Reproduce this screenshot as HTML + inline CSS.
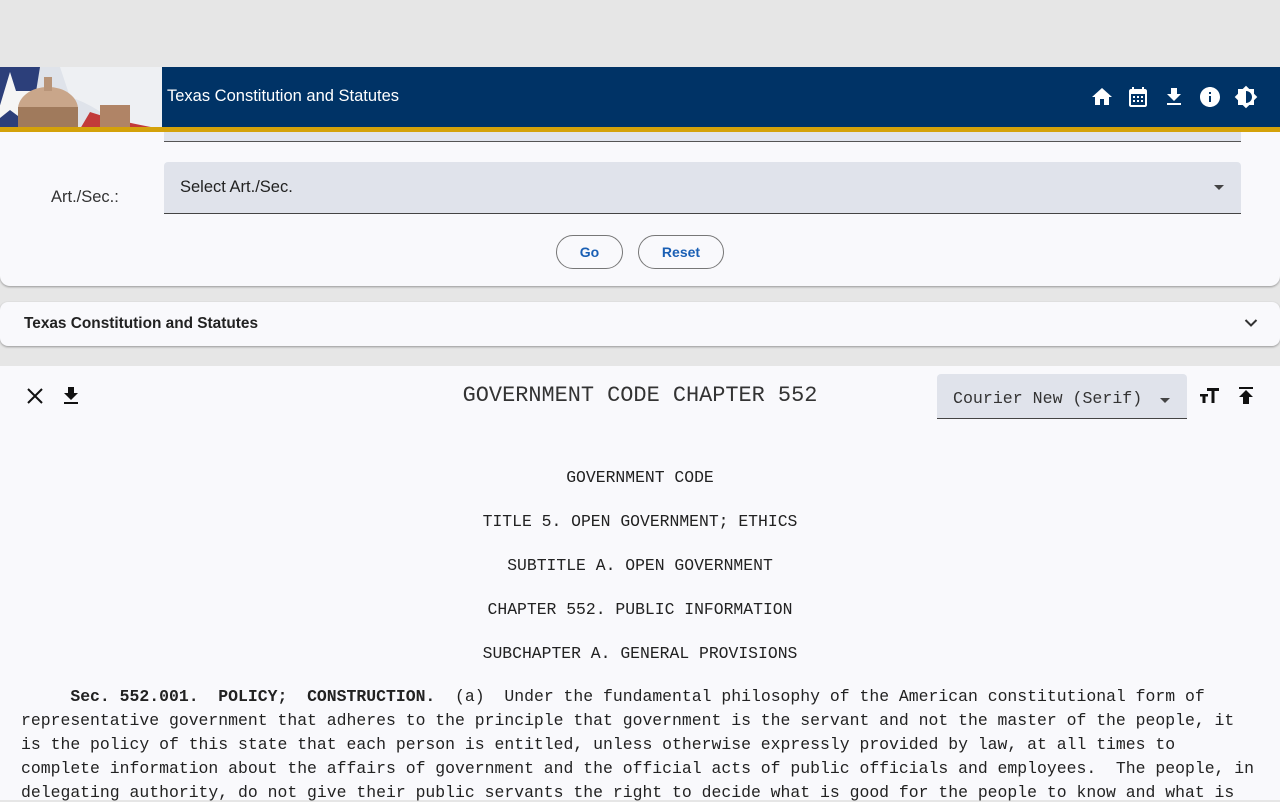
<!DOCTYPE html>
<html><head><meta charset="utf-8"><style>
*{box-sizing:border-box;margin:0;padding:0}
body{width:1280px;height:800px;overflow:hidden;background:#e6e6e6;font-family:"Liberation Sans",sans-serif;position:relative}
.abs{position:absolute}
.hdr{left:0;top:67px;width:1280px;height:60px;background:#003366}
.gold{left:0;top:127px;width:1280px;height:5px;background:#d4a20a}
.card{left:0;top:132px;width:1280px;height:154px;background:#f9f9fc;border-radius:0 0 10px 10px;box-shadow:0 1px 2px rgba(0,0,0,.35)}
.acc{left:0;top:302px;width:1280px;height:44px;background:#f9f9fc;border-radius:8px;box-shadow:0 1px 2px rgba(0,0,0,.35)}
.panel{left:0;top:366px;width:1280px;height:434px;background:#f9f9fc}
.mono{font-family:"Liberation Mono","Courier New",monospace;color:#222}
.btn{top:235px;height:34px;border:1px solid #777;border-radius:17px;color:#1a5fb4;font-weight:bold;font-size:14px;text-align:center;line-height:32px}
.c{font-size:16.4px;position:absolute;left:0;width:1280px;text-align:center}
.t{font-size:16.45px;white-space:pre;position:absolute;left:21px}
</style></head><body>
<div class="abs hdr"></div>
<svg class="abs" style="left:0;top:67px" width="162" height="62" viewBox="0 0 162 62">
<rect width="162" height="62" fill="#dfe3ea"/>
<path d="M0 0H40L30 62H0Z" fill="#2c3f7a"/>
<path d="M10 5L16 24L35 24L20 35L26 55L10 43L-5 55Z" fill="#f5f5f5"/>
<path d="M60 0H162V62H120Q100 40 70 30Z" fill="#eef0f3"/>
<path d="M90 45Q120 55 162 62H80Z" fill="#c23a3a"/>
<ellipse cx="48" cy="42" rx="30" ry="22" fill="#c9a68a"/>
<rect x="18" y="40" width="60" height="22" fill="#a07a5c"/>
<rect x="44" y="10" width="8" height="14" fill="#b89478"/>
<rect x="100" y="38" width="30" height="24" fill="#b08466"/>
</svg>
<div class="abs" style="left:167px;top:87px;color:#fff;font-size:16.5px">Texas Constitution and Statutes</div>
<svg class="abs" style="left:1090px;top:85px" width="170" height="24" viewBox="0 0 170 24" fill="#fff">
<path d="M10 20v-6h4v6h5v-8h3L12 3 2 12h3v8z"/>
<g transform="translate(36,0)"><path d="M19 4h-1V2h-2v2H8V2H6v2H5C3.9 4 3 4.9 3 6v14c0 1.1.9 2 2 2h14c1.1 0 2-.9 2-2V6c0-1.1-.9-2-2-2zm0 16H5V9h14z"/><rect x="7" y="11" width="2" height="2"/><rect x="11" y="11" width="2" height="2"/><rect x="15" y="11" width="2" height="2"/><rect x="7" y="15" width="2" height="2"/><rect x="11" y="15" width="2" height="2"/><rect x="15" y="15" width="2" height="2"/></g>
<g transform="translate(72,0)"><path d="M19 9h-4V3H9v6H5l7 7zM5 18v2h14v-2z"/></g>
<g transform="translate(108,0)"><path d="M12 2C6.5 2 2 6.5 2 12s4.5 10 10 10 10-4.5 10-10S17.5 2 12 2zm1 15h-2v-6h2zm0-8h-2V7h2z"/></g>
<g transform="translate(144,0)"><path d="M20 8.7V4h-4.7L12 .7 8.7 4H4v4.7L.7 12 4 15.3V20h4.7l3.3 3.3 3.3-3.3H20v-4.7l3.3-3.3zM12 18V6c3.3 0 6 2.7 6 6s-2.7 6-6 6z"/></g>
</svg>
<div class="abs card"></div>
<div class="abs gold"></div>
<div class="abs" style="left:164px;top:132px;width:1077px;height:10px;background:#e0e3eb;border-bottom:1px solid #555"></div>
<div class="abs" style="left:164px;top:162px;width:1077px;height:52px;background:#e0e3eb;border-bottom:1px solid #444;border-radius:4px 4px 0 0"></div>
<div class="abs" style="left:180px;top:178px;font-size:16.5px;color:#222">Select Art./Sec.</div>
<svg class="abs" style="left:1213px;top:184px" width="12" height="8"><path d="M1 1h10L6 6z" fill="#444"/></svg>
<div class="abs" style="left:51px;top:188px;font-size:16.5px;color:#333">Art./Sec.:</div>
<div class="abs btn" style="left:556px;width:67px">Go</div>
<div class="abs btn" style="left:638px;width:86px">Reset</div>
<div class="abs acc"></div>
<div class="abs" style="left:24px;top:315px;font-size:15.4px;font-weight:bold;color:#222">Texas Constitution and Statutes</div>
<svg class="abs" style="left:1244px;top:318px" width="14" height="10"><path d="M1.5 2l5.5 5.5 5.5-5.5" stroke="#333" stroke-width="2" fill="none"/></svg>
<div class="abs panel"></div>
<svg class="abs" style="left:26px;top:387px" width="18" height="18"><path d="M2 2l14 14M16 2L2 16" stroke="#111" stroke-width="2"/></svg>
<svg class="abs" style="left:62px;top:386px" width="18" height="20"><path d="M6 1h6v6h4l-7 7-7-7h4z" fill="#111"/><rect x="2" y="16" width="14" height="2" fill="#111"/></svg>
<div class="abs mono" style="left:0;width:1280px;text-align:center;top:383px;font-size:21.9px;color:#333">GOVERNMENT CODE CHAPTER 552</div>
<div class="abs" style="left:937px;top:374px;width:250px;height:45px;background:#e0e3eb;border-bottom:1px solid #444;border-radius:4px 4px 0 0"></div>
<div class="abs mono" style="left:953px;top:389px;font-size:16.6px;color:#333">Courier New (Serif)</div>
<svg class="abs" style="left:1159px;top:397px" width="12" height="8"><path d="M1 1h10L6 6z" fill="#444"/></svg>
<svg class="abs" style="left:1199px;top:386px" width="22" height="20"><path d="M8 2h12v3h-4.5v12h-3V5H8z M1 8h8v2.5H6.5V17h-3v-6.5H1z" fill="#111"/></svg>
<svg class="abs" style="left:1237px;top:386px" width="18" height="20"><rect x="2" y="1" width="14" height="2" fill="#111"/><path d="M9 4l7 7h-4v7H6v-7H2z" fill="#111"/></svg>
<div class="mono">
<div class="c" style="top:468px">GOVERNMENT CODE</div>
<div class="c" style="top:512px">TITLE 5. OPEN GOVERNMENT;  ETHICS</div>
<div class="c" style="top:556px">SUBTITLE A. OPEN GOVERNMENT</div>
<div class="c" style="top:600px">CHAPTER 552. PUBLIC INFORMATION</div>
<div class="c" style="top:644px">SUBCHAPTER A. GENERAL PROVISIONS</div>
<div class="t" style="top:687px">     <b>Sec. 552.001.  POLICY;  CONSTRUCTION.</b>  (a)  Under the fundamental philosophy of the American constitutional form of</div>
<div class="t" style="top:711px">representative government that adheres to the principle that government is the servant and not the master of the people, it</div>
<div class="t" style="top:735px">is the policy of this state that each person is entitled, unless otherwise expressly provided by law, at all times to</div>
<div class="t" style="top:759px">complete information about the affairs of government and the official acts of public officials and employees.  The people, in</div>
<div class="t" style="top:783px">delegating authority, do not give their public servants the right to decide what is good for the people to know and what is</div>
</div>
</body></html>
